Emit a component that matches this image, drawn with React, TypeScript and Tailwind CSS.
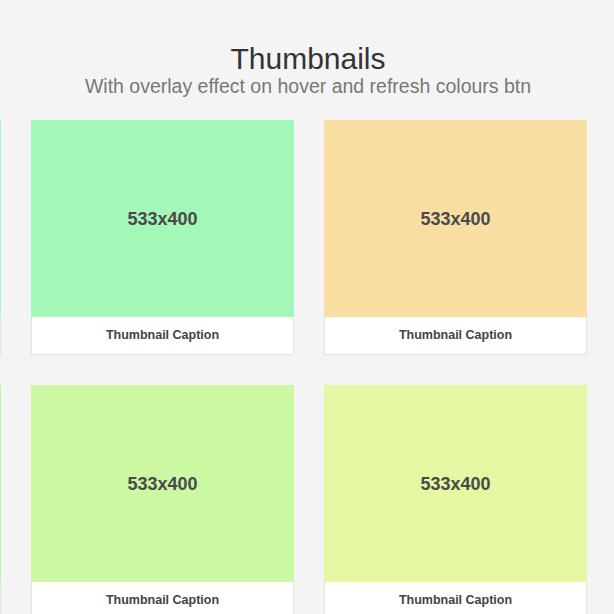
const rows: string[][] = [
  ["#a3f7d6", "#a3f7b8", "#f8dea3"],
  ["#b8f7a3", "#ccf7a3", "#e4f7a3"],
];

function Thumb({ color }: { color: string }) {
  return (
    <div className="w-[263px] shrink-0">
      <div
        className="h-[197px] pt-[2px] flex items-center justify-center text-[18px] font-bold text-[#4a4a4a]"
        style={{ backgroundColor: color }}
      >
        533x400
      </div>
      <div className="h-[38px] bg-white border border-t-0 border-[#e3e3e3] flex items-center justify-center text-[12.5px] font-bold text-[#444]">
        Thumbnail Caption
      </div>
    </div>
  );
}

export default function App() {
  return (
    <div className="min-h-screen w-full overflow-hidden bg-[#f4f4f4] font-['Liberation_Sans',Arial,sans-serif]">
      <header className="pt-[42px] text-center pl-[2px]">
        <h1 className="text-[30px] leading-[33px] text-[#333]">Thumbnails</h1>
        <p className="text-[19.5px] leading-[22px] text-[#777]">
          With overlay effect on hover and refresh colours btn
        </p>
      </header>
      <div className="mt-[23px] ml-[-262px] flex flex-col gap-[30px]">
        {rows.map((row, i) => (
          <div key={i} className="flex gap-[30px]">
            {row.map((c, j) => (
              <Thumb key={j} color={c} />
            ))}
          </div>
        ))}
      </div>
    </div>
  );
}
